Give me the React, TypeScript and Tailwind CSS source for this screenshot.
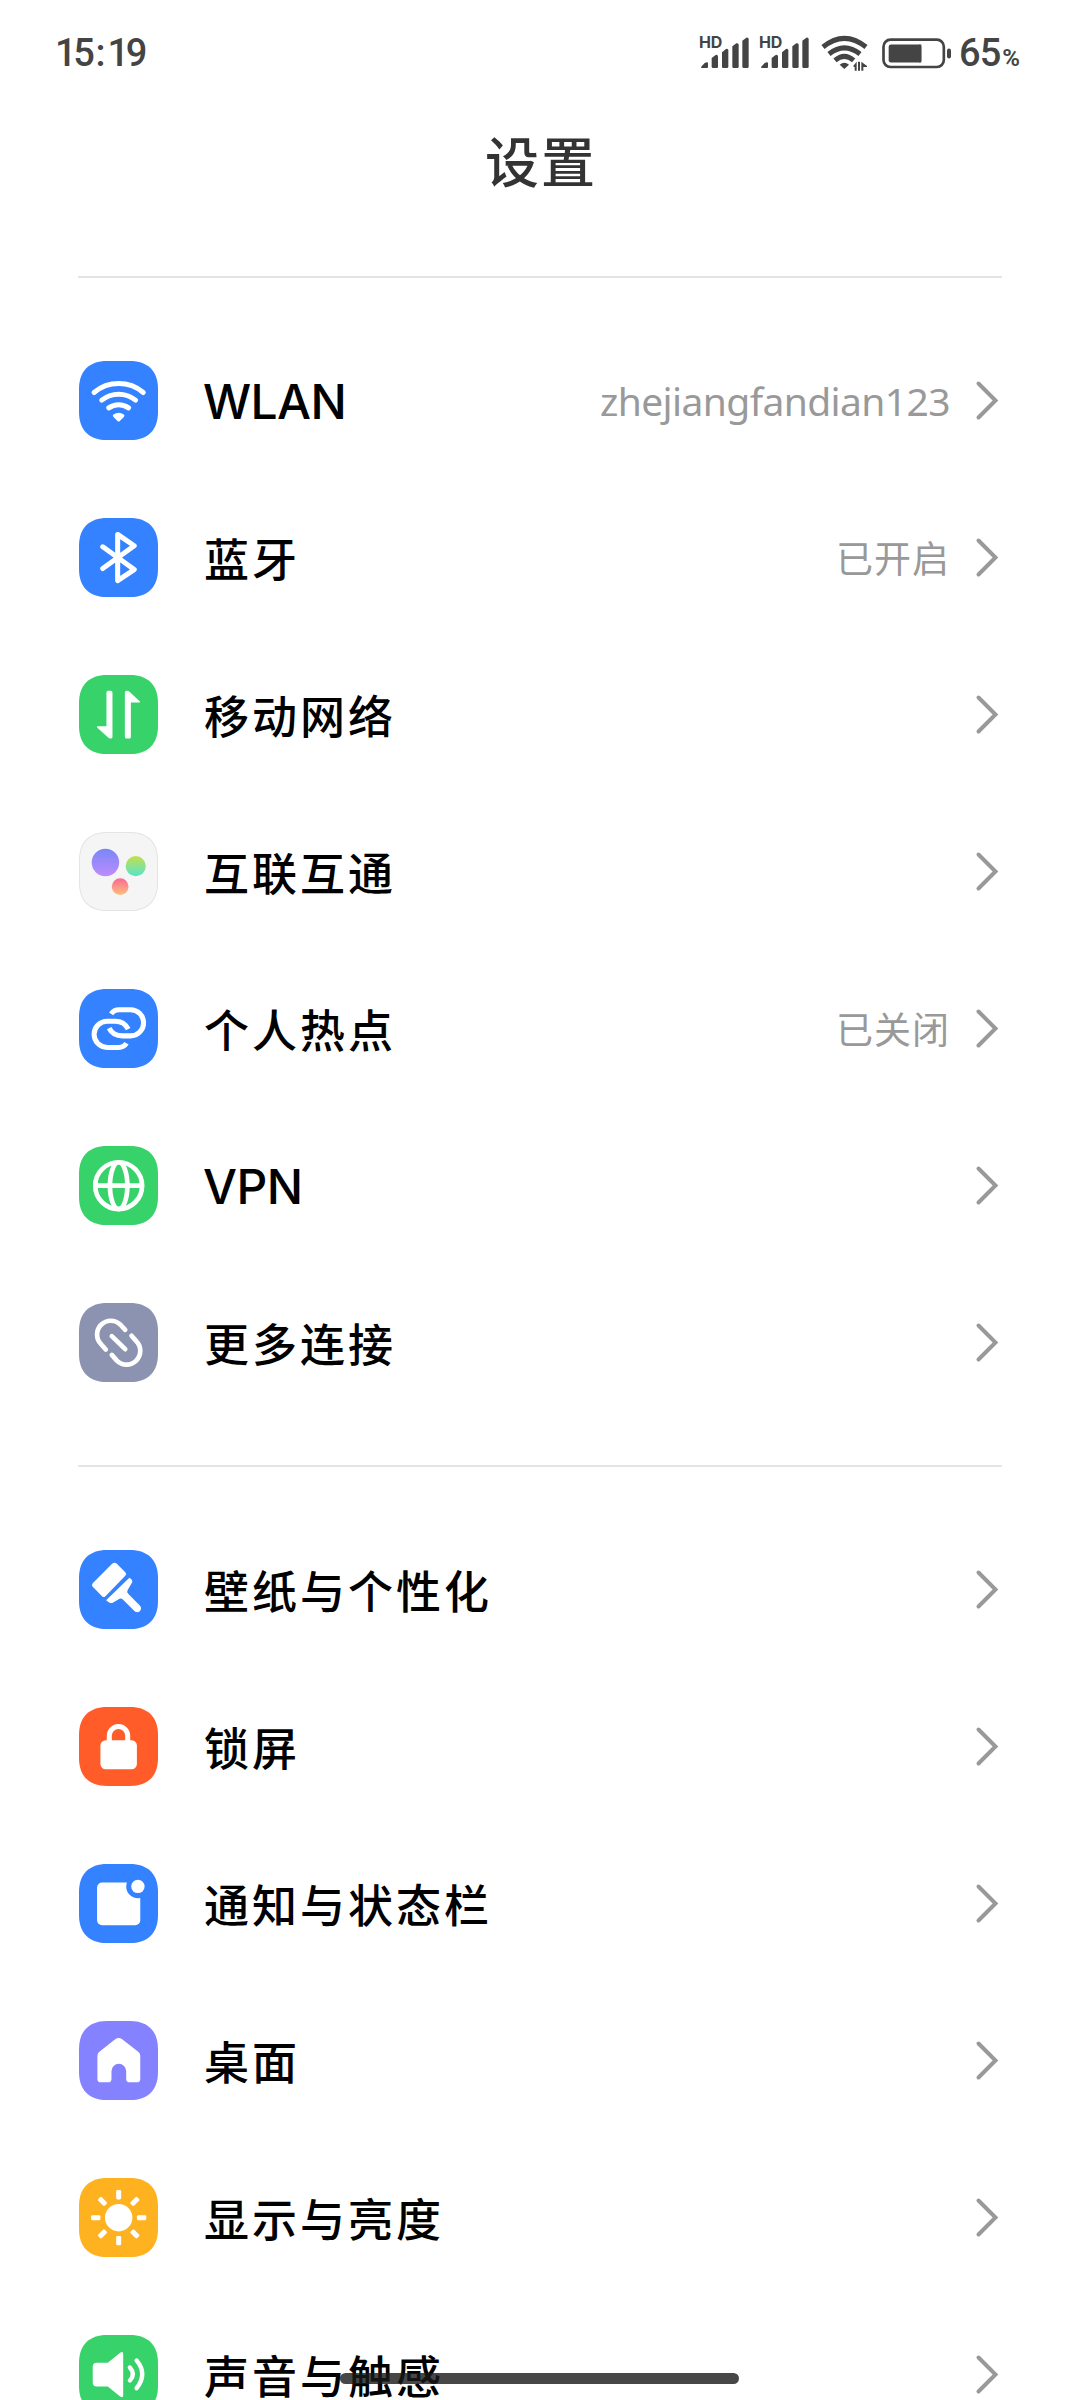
import type { ReactNode } from "react";

type IconName =
  | "wlan"
  | "bluetooth"
  | "mobile"
  | "interconnect"
  | "hotspot"
  | "vpn"
  | "more"
  | "wallpaper"
  | "lock"
  | "notification"
  | "home"
  | "display"
  | "sound";

type Item = { icon: IconName; color: string; label: string; value?: string; latin?: boolean };

const CONNECTION_ITEMS: Item[] = [
  { icon: "wlan", color: "#3482ff", label: "WLAN", value: "zhejiangfandian123", latin: true },
  { icon: "bluetooth", color: "#3482ff", label: "蓝牙", value: "已开启" },
  { icon: "mobile", color: "#38d26a", label: "移动网络" },
  { icon: "interconnect", color: "#f5f5f5", label: "互联互通" },
  { icon: "hotspot", color: "#3482ff", label: "个人热点", value: "已关闭" },
  { icon: "vpn", color: "#38d26a", label: "VPN", latin: true },
  { icon: "more", color: "#8c93b0", label: "更多连接" },
];

const PERSONAL_ITEMS: Item[] = [
  { icon: "wallpaper", color: "#3482ff", label: "壁纸与个性化" },
  { icon: "lock", color: "#ff5c29", label: "锁屏" },
  { icon: "notification", color: "#3482ff", label: "通知与状态栏" },
  { icon: "home", color: "#8482ff", label: "桌面" },
  { icon: "display", color: "#ffb220", label: "显示与亮度" },
  { icon: "sound", color: "#38d26a", label: "声音与触感" },
];

const line = {
  fill: "none",
  stroke: "#fff",
  strokeWidth: 15,
  strokeLinecap: "round",
  strokeLinejoin: "round",
} as const;

// All glyphs share the 236x236 grid of the tile
const GLYPHS: Record<IconName, ReactNode> = {
  wlan: (
    <>
      <path {...line} d="M45 94A115 115 0 0 1 192 94" />
      <path {...line} d="M68 117A80 80 0 0 1 169 117" />
      <path {...line} d="M89 140A50 50 0 0 1 148 140" />
      <path fill="#fff" d="M103 160Q118.500 149 134 160Q138 163 134 167L122 179Q118.500 182 115 179L103 167Q99 163 103 160Z" />
    </>
  ),
  bluetooth: <path {...line} d="M71 86L165 154L115.500 187V49L165 83L71 151" />,
  mobile: (
    <path
      fill="#fff"
      d="M82 52Q82 47 87 47H95Q100 47 100 52V185Q100 190 95 190H93Q90 190 87 187L54 157Q52 153 56 153H82ZM155 185Q155 190 150 190H142Q137 190 137 185V52Q137 47 142 47H145Q148 47 151 50L182 79Q184 82 180 82H155Z"
    />
  ),
  interconnect: (
    <>
      <defs>
        <linearGradient id="ballPurple" x1="0" y1="0" x2="0" y2="1">
          <stop stopColor="#7a86f8" />
          <stop offset="1" stopColor="#bd8dfd" />
        </linearGradient>
        <linearGradient id="ballGreen" x1="0" y1="0" x2="0" y2="1">
          <stop stopColor="#c3e04e" />
          <stop offset="1" stopColor="#55e3cd" />
        </linearGradient>
        <linearGradient id="ballRed" x1="0" y1="0" x2="0" y2="1">
          <stop stopColor="#fb6893" />
          <stop offset="1" stopColor="#fec07c" />
        </linearGradient>
      </defs>
      <circle cx="79" cy="91" r="41" fill="url(#ballPurple)" />
      <circle cx="169.500" cy="102" r="30" fill="url(#ballGreen)" />
      <circle cx="123" cy="163" r="25" fill="url(#ballRed)" />
    </>
  ),
  hotspot: (
    <g {...line} strokeLinecap="butt">
      <path d="M96 74Q104 62 120 62H154A39 39 0 0 1 154 140H130Q101 140 90 117" />
      <path d="M142 162Q134 174.500 118 174.500H84A39 39 0 0 1 84 96.500H108Q135 96.500 147 120" />
    </g>
  ),
  vpn: (
    <g {...line} strokeWidth={14}>
      <circle cx="118.500" cy="118.500" r="70" />
      <ellipse cx="118.500" cy="118.500" rx="26" ry="70" />
      <path d="M49 118.500H188" />
    </g>
  ),
  more: (
    <g {...line} strokeWidth={14}>
      <path d="M138 80L124 65A41 41 0 0 0 66 123L80 139" />
      <path d="M98 155L113 172A41 41 0 0 0 171 114L157 98" />
      <path d="M98 99L138 138" />
    </g>
  ),
  wallpaper: (
    <g fill="#fff">
      <path d="M99 41Q106 35 113 41L139 67Q143 72 139 76L79 138Q74 143 69 138L41 110Q36 105 41 99Z" />
      <path d="M145 88L151 83L157 88Q160 91 159 96L145 120Q142 126 147 131L183 167Q188 173 184 180Q178 190 167 184L131 148Q126 143 121 146L102 157Q96 160 90 157L81 150Z" />
    </g>
  ),
  lock: (
    <>
      <path {...line} d="M90.500 106V86A27.500 27.500 0 0 1 145.500 86V106" />
      <rect x="64" y="99" width="109" height="87" rx="16" fill="#fff" />
    </>
  ),
  notification: (
    <>
      <rect x="54" y="55" width="129" height="128" rx="15" fill="#fff" />
      <circle cx="176" cy="67" r="35" fill="#3482ff" />
      <circle cx="176" cy="67" r="20" fill="#fff" />
    </>
  ),
  home: (
    <path
      fill="#fff"
      d="M109 54Q118.500 47 128 54L177 92Q183 97 183 104V173Q183 183 173 183H151Q141 183 141 173V150A22 22 0 0 0 97 150V173Q97 183 87 183H65Q55 183 55 173V104Q55 97 61 92Z"
    />
  ),
  display: (
    <g fill="#fff">
      <circle cx="118.500" cy="118.500" r="41" />
      {[0, 45, 90, 135, 180, 225, 270, 315].map((deg) => (
        <rect key={deg} x="111" y="36" width="15" height="28" rx="4" transform={`rotate(${deg} 118.500 118.500)`} />
      ))}
    </g>
  ),
  sound: (
    <>
      <path fill="#fff" d="M41 95Q41 83 53 83H86L123 53Q132 47 132 57V180Q132 190 123 184L86 154H53Q41 154 41 142Z" />
      <path {...line} strokeWidth={13} d="M152 97Q170 117 152 136" />
      <path {...line} strokeWidth={13} d="M172 76Q206 117 172 159" />
    </>
  ),
};

function TileIcon({ icon, color }: { icon: IconName; color: string }) {
  return (
    <svg viewBox="0 0 236 236" className="h-[79px] w-[79px] shrink-0">
      <path
        d="M0 84C0 30 30 0 84 0H152C206 0 236 30 236 84V152C236 206 206 236 152 236H84C30 236 0 206 0 152Z"
        fill={icon === "interconnect" ? "#e4e4e4" : color}
      />
      {icon === "interconnect" && (
        <path
          d="M3 84C3 32 32 3 84 3H152C204 3 233 32 233 84V152C233 204 204 233 152 233H84C32 233 3 204 3 152Z"
          fill={color}
        />
      )}
      {GLYPHS[icon]}
    </svg>
  );
}

function Chevron() {
  return (
    <svg viewBox="0 0 24 42" className="ml-[25px] h-[42px] w-[24px] shrink-0" fill="none">
      <path d="M3.500 3.500L20.500 20.500L3.500 37.500" stroke="#999" strokeWidth="4" strokeLinecap="round" />
    </svg>
  );
}

function SettingRow({ item }: { item: Item }) {
  return (
    <div className="flex h-[157px] items-center pr-[81px] pl-[79px]">
      <TileIcon icon={item.icon} color={item.color} />
      {item.latin ? (
        <span className="ml-[45px] pt-[3px] font-['Inter'] text-[48px] leading-none font-medium tracking-[-0.6px] text-black">
          {item.label}
        </span>
      ) : (
        <span className="ml-[46px] font-['Noto_Sans_CJK_SC',sans-serif] text-[45px] leading-none font-medium tracking-[3px] text-black">
          {item.label}
        </span>
      )}
      <div className="flex flex-1 items-center justify-end">
        {item.value && item.latin && (
          <span className="font-['Noto_Sans',sans-serif] text-[39px] leading-none tracking-[-0.6px] text-[#999]">
            {item.value}
          </span>
        )}
        {item.value && !item.latin && (
          <span className="font-['Noto_Sans_CJK_SC',sans-serif] text-[37px] leading-none tracking-[1px] text-[#999]">
            {item.value}
          </span>
        )}
        <Chevron />
      </div>
    </div>
  );
}

function Signal() {
  return (
    <div className="relative h-[34px] w-[50px]">
      <span className="absolute top-0 left-0 font-['Inter'] text-[16px] leading-[12px] font-bold tracking-[-0.2px]">
        HD
      </span>
      <svg viewBox="0 0 150 102" className="h-[34px] w-[50px]" fill="#444">
        <path d="M6 93L17 81Q26 77 27 81V93Q27 96 24 96H9Q6 96 6 93Z" />
        <path d="M38 66L50 57Q56 55 57 61V92Q57 96 53 96H42Q38 96 38 92Z" />
        <path d="M69 49L81 39Q87 37 88 43V92Q88 96 84 96H73Q69 96 69 92Z" />
        <path d="M100 31L112 22Q118 20 119 26V92Q119 96 115 96H104Q100 96 100 92Z" />
        <path d="M130 14L142 5Q148 3 149 9V92Q149 96 145 96H134Q130 96 130 92Z" />
      </svg>
    </div>
  );
}

function StatusBar() {
  return (
    <div className="flex h-[106px] items-center justify-between pr-[60px] pl-[55px] text-[#444]">
      <div className="flex font-['Roboto'] text-[38px] leading-none font-medium">
        <span className="tracking-[-3.4px]">15</span>
        <span className="mr-[2px] ml-[4px]">:</span>
        <span className="tracking-[-3.4px]">19</span>
      </div>
      <div className="flex items-center">
        <Signal />
        <div className="ml-[10px]">
          <Signal />
        </div>
        <svg viewBox="0 0 141 108" className="ml-[12px] h-[36px] w-[47px]" fill="none" stroke="#444" strokeWidth="15">
          <path d="M6 36Q70 -16 135 36" />
          <path d="M24 57Q70 20 117 57" />
          <path d="M42 76Q70 52 98 76" />
          <path d="M56 89Q70 78 84 89L70 102Z" fill="#444" stroke="none" />
          <path d="M96 94L107 80V107H101V96ZM111 80H117V107H111ZM121 80L138 93V96H127V107H121Z" fill="#444" stroke="none" />
        </svg>
        <svg viewBox="0 0 210 92" className="ml-[14px] h-[31px] w-[70px]">
          <rect x="4.500" y="4.500" width="181" height="82" rx="21" fill="none" stroke="#444" strokeWidth="8" />
          <rect x="20" y="19" width="98" height="54" rx="7" fill="#444" />
          <rect x="111" y="19" width="7" height="54" fill="#444" />
          <rect x="195" y="31" width="12" height="30" rx="6" fill="#444" />
        </svg>
        <div className="ml-[7px] flex items-baseline font-['Roboto'] font-medium">
          <span className="text-[38px] leading-none tracking-[-1px]">65</span>
          <span className="ml-[2px] text-[24px] leading-none font-semibold">%</span>
        </div>
      </div>
    </div>
  );
}

function Divider() {
  return <div className="mx-[78px] my-[44px] h-[2px] bg-[#e4e4e4]" />;
}

export default function App() {
  return (
    <div className="relative h-[2400px] w-[1080px] overflow-hidden bg-white">
      <StatusBar />
      <h1 className="flex h-[126px] justify-center pt-[27px] pl-[2px] font-['Noto_Sans_CJK_SC',sans-serif] text-[54px] leading-[54px] font-medium tracking-[2px] text-[#333]">
        设置
      </h1>

      <Divider />
      {CONNECTION_ITEMS.map((item) => (
        <SettingRow key={item.label} item={item} />
      ))}

      <Divider />
      {PERSONAL_ITEMS.map((item) => (
        <SettingRow key={item.label} item={item} />
      ))}

      {/* Gesture bar */}
      <div className="absolute top-[2373px] left-[340px] h-[11px] w-[399px] rounded-full bg-[#191919]/80" />
    </div>
  );
}
